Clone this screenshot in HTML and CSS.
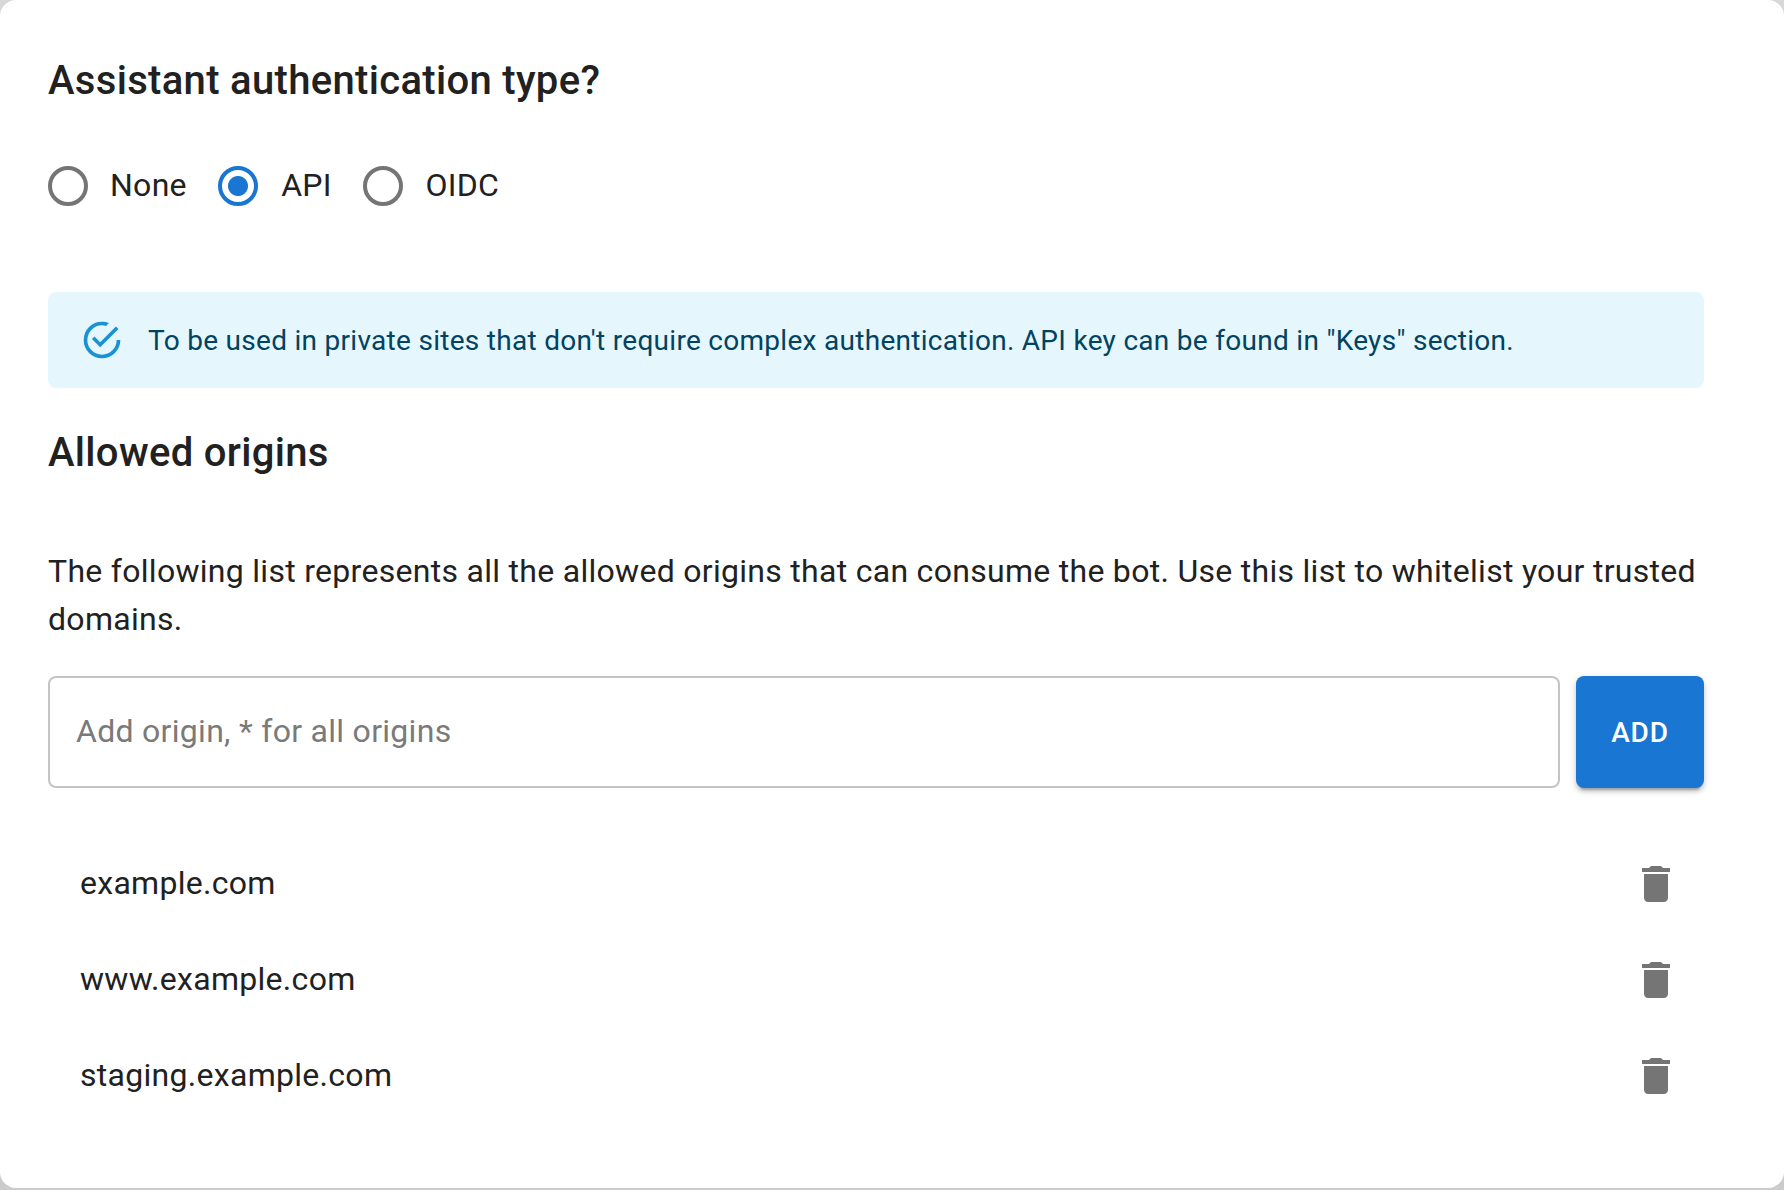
FILE: index.html
```
<!DOCTYPE html>
<html lang="en">
    <head>
        <meta charset="utf-8">
        <title>Assistant authentication</title>
        <link rel="stylesheet" href="styles.css">
    </head>
    <body>
    <div class="card">
        <h2 class="title">Assistant authentication type?</h2>
        <div class="radios">
            <label class="radio"><input type="radio" name="auth" value="none"><span>None</span></label>
            <label class="radio"><input type="radio" name="auth" value="api" checked><span>API</span></label>
            <label class="radio"><input type="radio" name="auth" value="oidc"><span>OIDC</span></label>
        </div>
        <div class="alert">
            <svg class="alert-icon" viewBox="0 0 24 24"><path d="M20,12A8,8 0 0,1 12,20A8,8 0 0,1 4,12A8,8 0 0,1 12,4C12.76,4 13.5,4.11 14.2,4.31L15.77,2.74C14.61,2.26 13.34,2 12,2A10,10 0 0,0 2,12A10,10 0 0,0 12,22A10,10 0 0,0 22,12M7.91,10.08L6.5,11.5L11,16L21,6L19.59,4.58L11,13.17L7.91,10.08Z"/></svg>
            <div class="alert-text">To be used in private sites that don't require complex authentication. API key can be found in "Keys" section.</div>
        </div>
        <h2 class="title origins-title">Allowed origins</h2>
        <p class="text">The following list represents all the allowed origins that can consume the bot. Use this list to whitelist your trusted domains.</p>
        <div class="add-row">
            <input type="text" class="origin" placeholder="Add origin, * for all origins">
            <button class="add">ADD</button>
        </div>
        <ul class="list">
            <li>
                <span>example.com</span>
                <button class="delete" aria-label="delete"><svg viewBox="0 0 24 24"><path d="M6 19c0 1.1.9 2 2 2h8c1.1 0 2-.9 2-2V7H6v12zM19 4h-3.5l-1-1h-5l-1 1H5v2h14V4z"/></svg></button>
            </li>
            <li>
                <span>www.example.com</span>
                <button class="delete" aria-label="delete"><svg viewBox="0 0 24 24"><path d="M6 19c0 1.1.9 2 2 2h8c1.1 0 2-.9 2-2V7H6v12zM19 4h-3.5l-1-1h-5l-1 1H5v2h14V4z"/></svg></button>
            </li>
            <li>
                <span>staging.example.com</span>
                <button class="delete" aria-label="delete"><svg viewBox="0 0 24 24"><path d="M6 19c0 1.1.9 2 2 2h8c1.1 0 2-.9 2-2V7H6v12zM19 4h-3.5l-1-1h-5l-1 1H5v2h14V4z"/></svg></button>
            </li>
        </ul>
    </div>
    </body>
</html>
```

FILE: styles.css
```
*{
    box-sizing: border-box;
}
body{
    margin: 0;
    height: 1190px;
    overflow: hidden;
    background: linear-gradient(#d8d8d8, #cbcbcb);
    font-family: Roboto, sans-serif;
    font-size: 32px;
    line-height: 48px;
    letter-spacing: 0.29px;
    color: #212121;
}
.card{
    height: 1188px;
    padding: 48px 80px 0 48px;
    background: #fff;
    border-radius: 16px;
}
.title{
    margin: 0;
    font-size: 40px;
    font-weight: 500;
    line-height: 66px;
    letter-spacing: 0.32px;
}
.radios{
    display: flex;
    gap: 31.6px;
    margin-top: 30px;
}
.radio{
    display: flex;
    align-items: center;
    height: 84px;
}
.radio input{
    appearance: none;
    width: 40px;
    height: 40px;
    margin: 0 22px 0 0;
    border: 4px solid #757575;
    border-radius: 50%;
}
.radio input:checked{
    margin-right: 22.7px;
    border-color: #1976d2;
    background: radial-gradient(circle, #1976d2 9.5px, transparent 10.5px);
}
.radio span, .list span{
    padding-bottom: 2px;
}
.alert{
    display: flex;
    gap: 24px;
    align-items: center;
    height: 96px;
    margin-top: 64px;
    padding: 0 32px;
    border-radius: 8px;
    background: #e5f6fd;
    color: #014361;
    font-size: 28px;
    line-height: 40px;
}
.alert-icon{
    width: 44px;
    height: 44px;
    fill: #0288d1;
    opacity: 0.9;
}
.alert-text{
    padding-top: 2px;
}
.origins-title{
    margin-top: 32px;
}
.text{
    margin: 61px 0 33px;
}
.add-row{
    display: flex;
    gap: 16px;
    height: 112px;
}
.origin{
    flex: 1;
    padding: 0 26px 2px;
    border: 2px solid #c4c4c4;
    border-radius: 8px;
    background: #fff;
    font: inherit;
    letter-spacing: inherit;
    color: inherit;
}
.origin::placeholder{
    color: #7a7a7a;
}
.add{
    width: 128px;
    padding: 0;
    border: 0;
    border-radius: 8px;
    background: #1976d2;
    color: #fff;
    font: 500 28px/49px Roboto, sans-serif;
    letter-spacing: 0.8px;
    box-shadow: 0 6px 2px -4px rgba(0,0,0,0.2), 0 4px 4px 0 rgba(0,0,0,0.14), 0 2px 10px 0 rgba(0,0,0,0.12);
}
.list{
    margin: 48px 0 0;
    padding: 0;
    list-style: none;
}
.list li{
    display: flex;
    justify-content: space-between;
    align-items: center;
    height: 96px;
    padding: 0 24px 0 32px;
}
.delete{
    display: flex;
    padding: 0;
    border: 0;
    background: none;
}
.delete svg{
    width: 48px;
    height: 48px;
    fill: #757575;
}
```
